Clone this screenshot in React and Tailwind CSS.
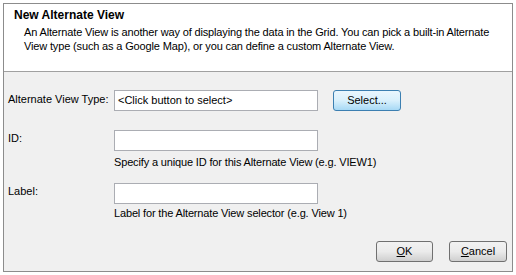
export default function App() {
  const font = { fontFamily: '"Liberation Sans", Arial, sans-serif' };
  return (
    <div className="w-[516px] h-[275px] bg-white pt-[3px] pl-[3px] text-[11px] leading-[14px] text-black" style={font}>
      <div className="w-[510px] h-[269px] border border-[#8c8c8c] flex flex-col bg-[#f0f0f0]">
        <div className="h-[68px] bg-white border-b border-[#a0a0a0] pl-[10px] pt-[4px] shrink-0">
          <div className="font-bold text-[12px] leading-[14px]">New Alternate View</div>
          <div className="pl-[10px] mt-[3px] pr-[4px] tracking-[-0.15px]">
            An Alternate View is another way of displaying the data in the Grid. You can pick a built-in Alternate View type (such as a Google Map), or you can define a custom Alternate View.
          </div>
        </div>
        <div className="flex-1 flex flex-col pl-[4px] pr-[5px] pt-[18px]">
          <div className="flex items-start h-[21px]">
            <div className="w-[106px] pt-[2px] leading-[14px]">Alternate View Type:</div>
            <div className="w-[204px] h-[21px] bg-white border border-[#abadb3] pl-[3px] leading-[19px]">&lt;Click button to select&gt;</div>
            <button className="ml-[15px] w-[68px] h-[21px] rounded-[3px] border border-[#3c7fb1] bg-gradient-to-b from-[#eaf6fd] via-[#d9f0fc] to-[#a7d9f5] leading-[19px] text-center">Select...</button>
          </div>
          <div className="flex items-start mt-[19px]">
            <div className="w-[106px] mt-[1px] leading-[14px]">ID:</div>
            <div className="flex flex-col">
              <div className="w-[204px] h-[21px] bg-white border border-[#abadb3]"></div>
              <div className="mt-[4px] leading-[14px] tracking-[-0.15px]">Specify a unique ID for this Alternate View (e.g. VIEW1)</div>
            </div>
          </div>
          <div className="flex items-start mt-[14px]">
            <div className="w-[106px] mt-[1px] leading-[14px]">Label:</div>
            <div className="flex flex-col">
              <div className="w-[204px] h-[21px] bg-white border border-[#abadb3]"></div>
              <div className="mt-[2px] leading-[14px] tracking-[-0.15px]">Label for the Alternate View selector (e.g. View 1)</div>
            </div>
          </div>
          <div className="flex justify-end gap-[16px] mt-[21px]">
            <button className="w-[57px] h-[21px] rounded-[3px] border border-[#707070] bg-gradient-to-b from-[#f2f2f2] via-[#ebebeb] to-[#cfcfcf] leading-[19px] text-center"><span className="underline">O</span>K</button>
            <button className="w-[58px] h-[21px] rounded-[3px] border border-[#707070] bg-gradient-to-b from-[#f2f2f2] via-[#ebebeb] to-[#cfcfcf] leading-[19px] text-center"><span className="underline">C</span>ancel</button>
          </div>
        </div>
      </div>
    </div>
  );
}
